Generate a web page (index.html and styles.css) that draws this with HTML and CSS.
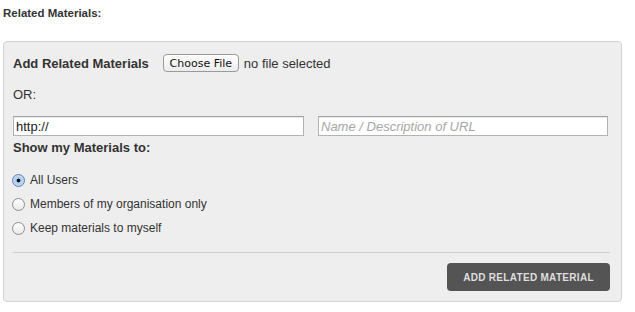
FILE: index.html
```html
<!DOCTYPE html>
<html lang="en">
<head>
  <meta charset="UTF-8">
  <title>Related Materials</title>
  <link rel="stylesheet" href="styles.css">
</head>
<body>
  <h3 class="section-title">Related Materials:</h3>

  <div class="panel">
    <div class="upload-row">
      <label class="upload-label">Add Related Materials</label>
      <button class="file-btn" type="button">Choose File</button>
      <span class="file-name">no file selected</span>
    </div>

    <p class="or">OR:</p>

    <div class="url-row">
      <input class="text-input url" type="text" value="http://">
      <input class="text-input desc" type="text" placeholder="Name / Description of URL">
    </div>

    <h4 class="share-title">Show my Materials to:</h4>

    <ul class="share-list">
      <li><label><input type="radio" name="share" checked> All Users</label></li>
      <li><label><input type="radio" name="share"> Members of my organisation only</label></li>
      <li><label><input type="radio" name="share"> Keep materials to myself</label></li>
    </ul>

    <hr class="divider">

    <div class="actions">
      <button class="submit-btn" type="button">Add Related Material</button>
    </div>
  </div>
</body>
</html>
```

FILE: styles.css
```css
body {
  margin: 0;
  padding: 0 3px;
  font-family: "Liberation Sans", Arial, sans-serif;
  color: #333;
  background: #fff;
}
.section-title {
  margin: 0;
  padding-top: 6px;
  font-size: 11.5px;
  line-height: 14px;
  font-weight: bold;
}
.panel {
  box-sizing: border-box;
  width: 619px;
  margin-top: 21px;
  padding: 12px 11px 10px 9px;
  background: #eeeeee;
  border: 1px solid #d2d2d2;
  border-radius: 4px;
}
.upload-row {
  display: flex;
  align-items: center;
  height: 18px;
}
.upload-label {
  font-size: 13px;
  font-weight: bold;
  margin-right: 14px;
}
.file-btn {
  box-sizing: border-box;
  width: 76px;
  height: 18px;
  padding: 0;
  font-family: "DejaVu Sans", sans-serif;
  font-size: 11px;
  color: #111;
  background: linear-gradient(#ffffff, #ececec);
  border: 1px solid #9a9a9a;
  border-radius: 4px;
}
.file-name {
  margin-left: 5px;
  font-size: 13px;
}
.or {
  margin: 15px 0 0;
  font-size: 13px;
  line-height: 16px;
}
.url-row {
  display: flex;
  gap: 14px;
  margin-top: 13px;
}
.text-input {
  box-sizing: border-box;
  height: 20px;
  padding: 0 2px;
  font-family: "Liberation Sans", Arial, sans-serif;
  font-size: 13px;
  color: #222;
  background: #fff;
  border: 1px solid #b3b3b3;
  border-top-color: #a0a0a0;
  box-shadow: inset 0 1px 1px rgba(0,0,0,0.08);
  border-radius: 0;
  outline: none;
}
.text-input.url {
  width: 291px;
}
.text-input.desc {
  width: 290px;
}
.text-input::placeholder {
  color: #a6a6a6;
  font-style: italic;
}
.share-title {
  margin: 4px 0 0;
  font-size: 13px;
  line-height: 16px;
  font-weight: bold;
}
.share-list {
  list-style: none;
  margin: 12px 0 0;
  padding: 0;
}
.share-list li {
  height: 24px;
  display: flex;
  align-items: center;
}
.share-list label {
  display: flex;
  align-items: center;
  font-size: 12px;
  color: #333;
}
.share-list input {
  appearance: none;
  -webkit-appearance: none;
  box-sizing: border-box;
  width: 13px;
  height: 13px;
  margin: 0 5px 0 -1px;
  border: 1px solid #8c8c8c;
  border-radius: 50%;
  background: linear-gradient(#ffffff, #e9e9e9);
}
.share-list input:checked {
  border-color: #5a7fb5;
  background: radial-gradient(circle, #111 0, #111 1.6px, #a9c9ee 2.2px, #d8e8f8 100%);
}
.divider {
  margin: 12px 0 0;
  border: none;
  border-top: 1px solid #cccccc;
}
.actions {
  display: flex;
  justify-content: flex-end;
  margin-top: 10px;
}
.submit-btn {
  width: 163px;
  height: 28px;
  padding: 0;
  font-family: "Liberation Sans", Arial, sans-serif;
  font-size: 10px;
  font-weight: bold;
  letter-spacing: 0.3px;
  text-transform: uppercase;
  color: #dedede;
  background: #545454;
  border: none;
  border-radius: 4px;
}
```
